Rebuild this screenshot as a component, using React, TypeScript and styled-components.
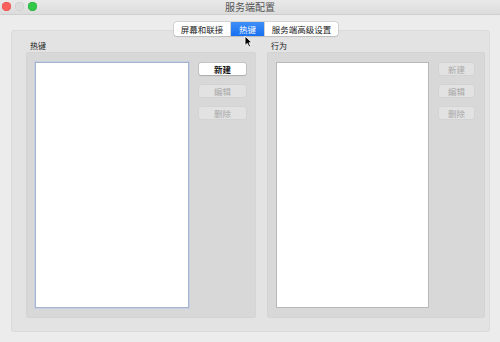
import React from "react";
import styled, { createGlobalStyle } from "styled-components";

const Global = createGlobalStyle`
  html, body { margin: 0; padding: 0; background: #ececec; }
  body { font-family: "Noto Sans CJK SC", "Noto Sans", sans-serif; }
`;

const Window = styled.div`
  position: relative;
  width: 500px;
  height: 342px;
  background: #ececec;
  display: flex;
  flex-direction: column;
  overflow: hidden;
`;

const TitleBar = styled.div`
  height: 14px;
  flex: none;
  display: flex;
  align-items: center;
  justify-content: center;
  position: relative;
  background: linear-gradient(#e9e9e9, #dcdcdc);
  border-bottom: 1px solid #cfcfcf;
`;

const Lights = styled.div`
  position: absolute;
  left: 2px;
  top: 2px;
  display: flex;
  gap: 4px;
`;

const Light = styled.span<{ $c: string; $b: string }>`
  width: 9px;
  height: 9px;
  border-radius: 50%;
  background: ${(p) => p.$c};
  box-shadow: inset 0 0 0 0.5px ${(p) => p.$b};
`;

const Title = styled.span`
  font-size: 10px;
  line-height: 14px;
  color: #555;
`;

const Body = styled.div`
  position: relative;
  flex: 1;
  padding: 15px 10px 10px 11px;
`;

const Tabs = styled.div`
  position: absolute;
  left: 174px;
  top: 7px;
  height: 14px;
  display: flex;
  background: #fff;
  border-radius: 3px;
  box-shadow: 0 0 0 0.5px #b9b9b9, 0 1px 1px rgba(0,0,0,0.15);
  z-index: 2;
  overflow: hidden;
`;

const Tab = styled.div<{ $active?: boolean; $w: number }>`
  width: ${(p) => p.$w}px;
  display: flex;
  align-items: center;
  justify-content: center;
  font-size: 8.5px;
  color: ${(p) => (p.$active ? "#fff" : "#222")};
  background: ${(p) => (p.$active ? "linear-gradient(#3f8ff8, #1870f0)" : "transparent")};
  & + & { border-left: 1px solid #d0d0d0; }
`;

const Outer = styled.div`
  height: 100%;
  box-sizing: border-box;
  background: #e3e3e3;
  border: 1px solid #dadada;
  border-radius: 3px;
  display: grid;
  grid-template-columns: 230px 218px;
  column-gap: 11px;
  padding: 0 4px 13px 14px;
`;

const Group = styled.div`
  display: flex;
  flex-direction: column;
  min-height: 0;
`;

const GroupLabel = styled.div`
  font-size: 8px;
  line-height: 10px;
  height: 10px;
  color: #222;
  padding: 10px 0 1px 4px;
`;

const GroupBox = styled.div`
  flex: 1;
  background: #d8d8d8;
  border-radius: 3px;
  box-shadow: inset 0 0 0 0.5px #d0d0d0;
  padding: 10px;
  padding-left: 9px;
  display: flex;
  gap: 10px;
`;

const List = styled.div<{ $focus?: boolean }>`
  width: ${(p) => (p.$focus ? 154 : 153)}px;
  box-sizing: border-box;
  background: #fff;
  border: 1px solid ${(p) => (p.$focus ? "#a6b4cf" : "#b8b8b8")};
  box-shadow: ${(p) => (p.$focus ? "0 0 0 1px #c5cfe0" : "none")};
`;

const Buttons = styled.div`
  display: flex;
  flex-direction: column;
  gap: 10px;
  padding-top: 1px;
`;

const Btn = styled.div<{ $enabled?: boolean; $w: number }>`
  width: ${(p) => p.$w}px;
  height: 12px;
  border-radius: 2px;
  display: flex;
  align-items: center;
  justify-content: center;
  font-size: 8.5px;
  font-weight: ${(p) => (p.$enabled ? 700 : 400)};
  color: ${(p) => (p.$enabled ? "#111" : "#a8a8a8")};
  background: ${(p) => (p.$enabled ? "#fff" : "#e2e2e2")};
  box-shadow: ${(p) =>
    p.$enabled
      ? "0 0 0 0.5px #b0b0b0, 0 1px 1px rgba(0,0,0,0.2)"
      : "0 0 0 0.5px #cdcdcd"};
`;

const Cursor = styled.svg`
  position: absolute;
  left: 244px;
  top: 20px;
  z-index: 3;
`;

export default function App() {
  return (
    <>
      <Global />
      <Window>
        <TitleBar>
          <Lights>
            <Light $c="#fc605c" $b="#de4a45" />
            <Light $c="#dcdcdc" $b="#c8c8c8" />
            <Light $c="#34c84a" $b="#25a838" />
          </Lights>
          <Title>服务端配置</Title>
        </TitleBar>
        <Body>
          <Tabs>
            <Tab $w={56}>屏幕和联接</Tab>
            <Tab $w={33} $active>热键</Tab>
            <Tab $w={73}>服务端高级设置</Tab>
          </Tabs>
          <Outer>
            <Group>
              <GroupLabel>热键</GroupLabel>
              <GroupBox>
                <List $focus />
                <Buttons>
                  <Btn $w={47} $enabled>新建</Btn>
                  <Btn $w={47}>编辑</Btn>
                  <Btn $w={47}>删除</Btn>
                </Buttons>
              </GroupBox>
            </Group>
            <Group>
              <GroupLabel>行为</GroupLabel>
              <GroupBox>
                <List />
                <Buttons>
                  <Btn $w={35}>新建</Btn>
                  <Btn $w={35}>编辑</Btn>
                  <Btn $w={35}>删除</Btn>
                </Buttons>
              </GroupBox>
            </Group>
          </Outer>
          <Cursor width="9" height="13" viewBox="0 0 9 13">
            <path d="M1 1 L1 10.5 L3.3 8.4 L5 12 L6.6 11.3 L5 7.8 L8 7.8 Z" fill="#000" stroke="#fff" strokeWidth="0.9" strokeLinejoin="round" />
          </Cursor>
        </Body>
      </Window>
    </>
  );
}
